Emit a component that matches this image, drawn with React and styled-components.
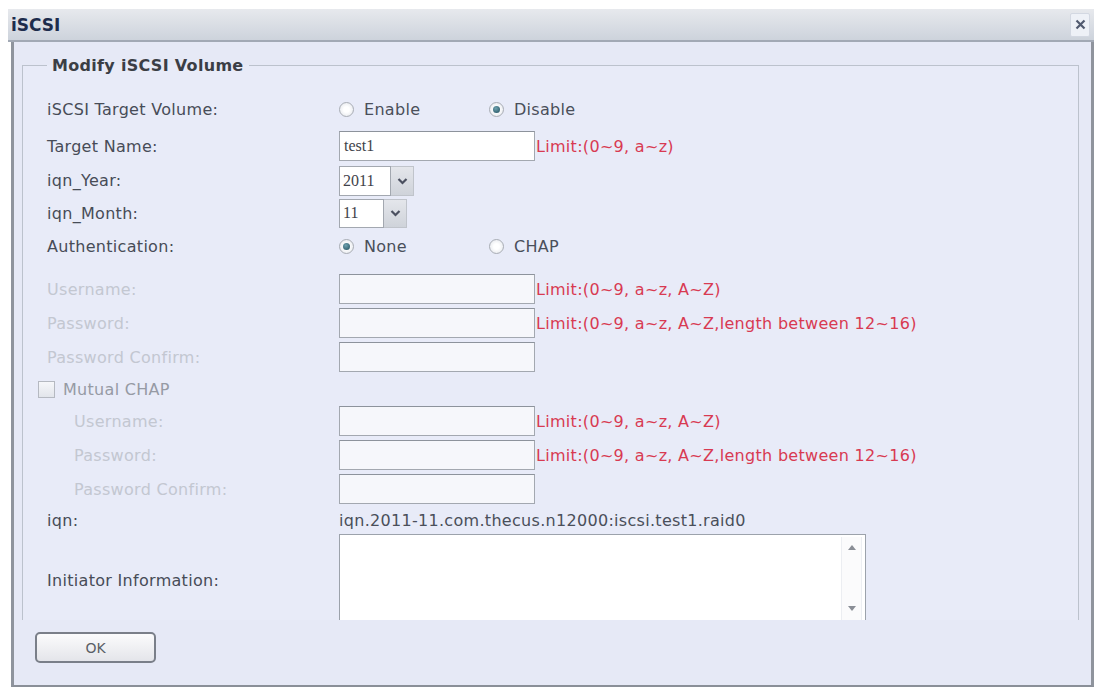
import React from 'react'
import styled, { createGlobalStyle } from 'styled-components'

// page styles //
const Global = createGlobalStyle`
  html, body {
    margin: 0;
    padding: 0;
    background: #ffffff;
  }
  body {
    font-family: "DejaVu Sans", Verdana, sans-serif;
  }
`

const Window = styled.div`
  width: 1086px;
  margin: 9px 0 0 8px;
  display: flex;
  flex-direction: column;
`

const TitleBar = styled.div`
  height: 33px;
  display: flex;
  align-items: center;
  justify-content: space-between;
  padding: 0 4px 0 3px;
  background: linear-gradient(#e7e9ed, #cdd3dc);
  border-bottom: 2px solid #a2a9b5;
  box-sizing: border-box;
`

const Title = styled.span`
  font-family: "DejaVu Sans", Verdana, sans-serif;
  font-weight: bold;
  font-size: 17px;
  color: #1d2c4c;
`

const CloseBtn = styled.div`
  width: 18px;
  height: 22px;
  display: flex;
  align-items: center;
  justify-content: center;
  background: #eef1f7;
  border: 1px solid #d3d8e2;
  border-radius: 2px;
`

const Body = styled.div`
  margin-left: 3px;
  background: #e6e9f6;
  border-left: 3px solid #8f949d;
  border-right: 3px solid #8f949d;
  border-bottom: 2px solid #8a8f98;
  display: flex;
  flex-direction: column;
`

const Scroll = styled.div`
  height: 578px;
  overflow: hidden;
  padding: 14px 12px 0 8px;
  box-sizing: border-box;
`

const Fieldset = styled.fieldset`
  margin: 0;
  padding: 16px 24px 0 24px;
  border: 1px solid #bcc2cd;
  background: #e8ebf8;
`

const Legend = styled.legend`
  padding: 0 5px;
  font-size: 16px;
  line-height: 19px;
  letter-spacing: 0.3px;
  font-weight: bold;
  color: #3b3e45;
`

const Row = styled.div`
  display: flex;
  align-items: center;
  height: ${p => p.$h || 34}px;
  margin-top: ${p => p.$mt || 0}px;
`

const Text = styled.span`
  font-size: 16px;
  letter-spacing: 0.3px;
  white-space: nowrap;
`

const Label = styled(Text)`
  width: ${p => (p.$indent ? 265 : 292)}px;
  padding-left: ${p => (p.$indent ? 27 : 0)}px;
  color: ${p => (p.$off ? '#c3c7d1' : '#474c57')};
`

const Option = styled.label`
  width: ${p => p.$w || 150}px;
  display: flex;
  align-items: center;
  gap: 10px;
  font-size: 16px;
  letter-spacing: 0.3px;
  color: #4a4f5a;
`

const RadioDot = styled.span`
  width: 15px;
  height: 15px;
  border-radius: 50%;
  box-sizing: border-box;
  border: 1px solid #a9adb5;
  background: radial-gradient(circle, #ffffff 30%, #dfe2e8 100%);
  display: flex;
  align-items: center;
  justify-content: center;
  &::after {
    content: '';
    width: 7px;
    height: 7px;
    border-radius: 50%;
    background: ${p => (p.$on ? 'radial-gradient(circle at 40% 35%, #6fa3b0, #1f4d5c)' : 'transparent')};
  }
`

const Check = styled.span`
  width: 17px;
  height: 17px;
  margin-left: -9px;
  box-sizing: border-box;
  border: 1px solid #b5b9c1;
  background: linear-gradient(#f6f7fa, #e2e5eb);
`

const CheckLabel = styled(Text)`
  margin-left: 8px;
  color: #969aa4;
`

const Input = styled.div`
  width: 196px;
  height: 30px;
  box-sizing: border-box;
  border: 1px solid #a3a8b0;
  border-top-color: #8d939c;
  background: ${p => (p.$off ? '#f6f7fb' : '#ffffff')};
  padding-left: 4px;
  display: flex;
  align-items: center;
  font-family: "Liberation Serif", "Times New Roman", serif;
  font-size: 16px;
  color: #3f434a;
`

const Limit = styled(Text)`
  margin-left: 1px;
  color: #d83a52;
`

const Combo = styled.div`
  display: flex;
  height: ${p => p.$h || 30}px;
`

const ComboText = styled.div`
  width: ${p => p.$w}px;
  box-sizing: border-box;
  border: 1px solid #a3a8b0;
  background: #ffffff;
  padding-left: 3px;
  display: flex;
  align-items: center;
  font-family: "Liberation Serif", "Times New Roman", serif;
  font-size: 16px;
  color: #3f434a;
`

const ComboArrow = styled.div`
  width: 23px;
  display: flex;
  align-items: center;
  justify-content: center;
  background: linear-gradient(#e4e6eb, #cfd3da);
  border: 1px solid #c0c4cb;
  border-left: none;
  box-sizing: border-box;
`

const Value = styled(Text)`
  color: #4a4f5a;
`

const TextBox = styled.div`
  width: 527px;
  height: 92px;
  box-sizing: border-box;
  border: 1px solid #9ca2ab;
  background: #ffffff;
  display: flex;
  justify-content: flex-end;
`

const ScrollTrack = styled.div`
  width: 19px;
  margin: 2px 3px 0 0;
  border-left: 1px solid #eceef2;
  border-right: 1px solid #eceef2;
  background: #fbfbfc;
  display: flex;
  flex-direction: column;
  justify-content: space-between;
  align-items: center;
  padding: 8px 0 14px;
`

const Footer = styled.div`
  height: 65px;
  padding: 12px 0 0 21px;
  box-sizing: border-box;
`

const OkButton = styled.button`
  width: 121px;
  height: 31px;
  border: 2px solid #7a7f89;
  border-radius: 5px;
  background: linear-gradient(#fbfbfc, #e4e5ea);
  font-family: "DejaVu Sans", Verdana, sans-serif;
  font-size: 14px;
  color: #5b5f67;
  padding: 0;
`

const Chevron = () => (
  <svg width="11" height="8" viewBox="0 0 11 8">
    <path d="M1.5 2 L5.5 6 L9.5 2" fill="none" stroke="#4b5060" strokeWidth="2.2" />
  </svg>
)

const Radio = ({ on, children, w }) => (
  <Option $w={w}>
    <RadioDot $on={on} />
    {children}
  </Option>
)

const TextRow = ({ label, off, indent, limit, value, mt }) => (
  <Row $mt={mt}>
    <Label $off={off} $indent={indent}>{label}</Label>
    <Input $off={off}>{value}</Input>
    {limit && <Limit>{limit}</Limit>}
  </Row>
)

const LIMIT_A = 'Limit:(0~9, a~z, A~Z)'
const LIMIT_B = 'Limit:(0~9, a~z, A~Z,length between 12~16)'

export default function App() {
  return (
    <>
      <Global />
      <Window>
        <TitleBar>
          <Title>iSCSI</Title>
          <CloseBtn>
            <svg width="11" height="11" viewBox="0 0 11 11">
              <path d="M1.5 1.5 L9.5 9.5 M9.5 1.5 L1.5 9.5" stroke="#515a70" strokeWidth="2.2" />
            </svg>
          </CloseBtn>
        </TitleBar>
        <Body>
          <Scroll>
            <Fieldset>
              <Legend>Modify iSCSI Volume</Legend>
              <Row $h={37}>
                <Label>iSCSI Target Volume:</Label>
                <Radio>Enable</Radio>
                <Radio on>Disable</Radio>
              </Row>
              <Row $h={36}>
                <Label>Target Name:</Label>
                <Input>test1</Input>
                <Limit>Limit:(0~9, a~z)</Limit>
              </Row>
              <Row $h={33}>
                <Label>iqn_Year:</Label>
                <Combo $h={30}>
                  <ComboText $w={52}>2011</ComboText>
                  <ComboArrow><Chevron /></ComboArrow>
                </Combo>
              </Row>
              <Row $h={32}>
                <Label>iqn_Month:</Label>
                <Combo $h={29}>
                  <ComboText $w={45}>11</ComboText>
                  <ComboArrow><Chevron /></ComboArrow>
                </Combo>
              </Row>
              <Row $h={34}>
                <Label>Authentication:</Label>
                <Radio on>None</Radio>
                <Radio>CHAP</Radio>
              </Row>
              <TextRow mt={9} label="Username:" off limit={LIMIT_A} />
              <TextRow label="Password:" off limit={LIMIT_B} />
              <TextRow label="Password Confirm:" off />
              <Row $h={30}>
                <Check />
                <CheckLabel>Mutual CHAP</CheckLabel>
              </Row>
              <TextRow label="Username:" off indent limit={LIMIT_A} />
              <TextRow label="Password:" off indent limit={LIMIT_B} />
              <TextRow label="Password Confirm:" off indent />
              <Row $h={28}>
                <Label>iqn:</Label>
                <Value>iqn.2011-11.com.thecus.n12000:iscsi.test1.raid0</Value>
              </Row>
              <Row $h={92}>
                <Label>Initiator Information:</Label>
                <TextBox>
                  <ScrollTrack>
                    <svg width="8" height="5" viewBox="0 0 8 5"><path d="M0 5 L4 0 L8 5 Z" fill="#8a8e96" /></svg>
                    <svg width="8" height="5" viewBox="0 0 8 5"><path d="M0 0 L4 5 L8 0 Z" fill="#8a8e96" /></svg>
                  </ScrollTrack>
                </TextBox>
              </Row>
            </Fieldset>
          </Scroll>
          <Footer>
            <OkButton>OK</OkButton>
          </Footer>
        </Body>
      </Window>
    </>
  )
}
